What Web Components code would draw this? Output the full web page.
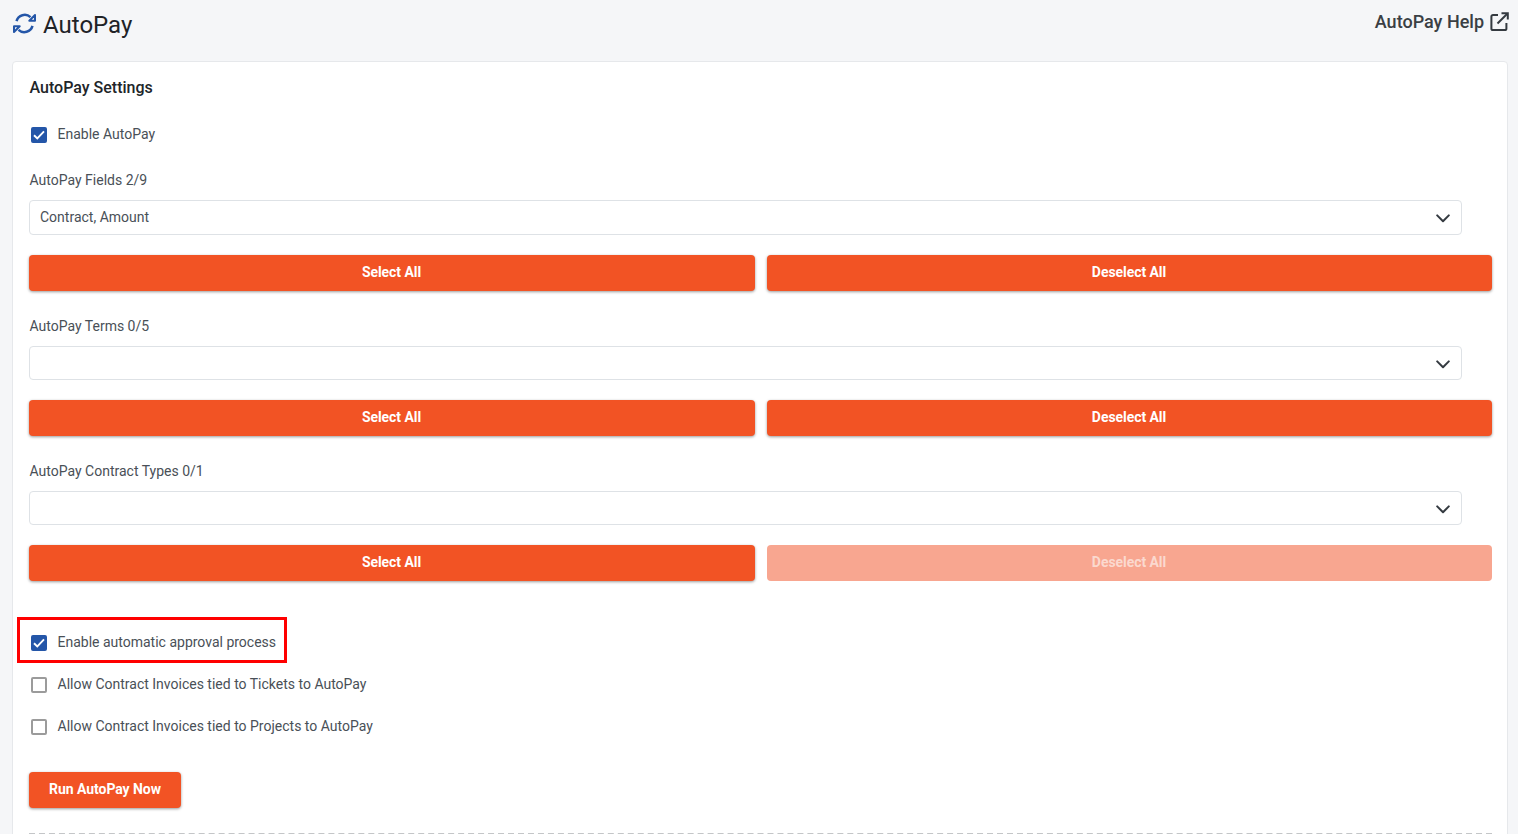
<!DOCTYPE html>
<html>
<head>
<meta charset="utf-8">
<title>AutoPay</title>
<style>
    html, body { margin: 0; height: 834px; overflow: hidden; background: #f5f6f8; }
    body { font-family: Roboto, "Liberation Sans", sans-serif; color: #212529; }
</style>
</head>
<body>
<autopay-page></autopay-page>

<script>
const CHEVRON = `<svg width="14" height="9" viewBox="0 0 14 9" fill="none"><path d="M1.2 1.4 7 7.2l5.8-5.8" stroke="#343a40" stroke-width="2" stroke-linecap="round" stroke-linejoin="round"/></svg>`;

class PageHeader extends HTMLElement {
    constructor() {
        super();
        this.attachShadow({ mode: 'open' });
        this.shadowRoot.innerHTML = `
            <style>
                :host { display: flex; justify-content: space-between; height: 61px; padding: 0 9px 0 12px; box-sizing: border-box; }
                .title { display: flex; align-items: center; gap: 7.5px; height: 50px; font-size: 24px; color: #1f2327; }
                .title svg { margin: 0 0 3px .5px; }
                .help { display: flex; align-items: center; gap: 6px; height: 43px; font-size: 18px; font-weight: 500; color: #3a3f44; }
                svg { display: block; }
            </style>
            <div class="title">
                <svg width="23" height="23" viewBox="0 0 23 23" fill="none" stroke="#2456a8" stroke-width="2.5">
                    <path d="M3.5 9.2A8.5 8.5 0 0 1 17.5 5.2"/>
                    <path d="M19.5 13.8A8.5 8.5 0 0 1 5.5 17.8"/>
                    <path d="M22 3v5.7h-5.7z" stroke-width="2" stroke-linejoin="round"/>
                    <path d="M1 20v-5.7h5.7z" stroke-width="2" stroke-linejoin="round"/>
                </svg>
                <span>AutoPay</span>
            </div>
            <div class="help">
                <span>AutoPay Help</span>
                <svg width="19" height="19" viewBox="0 0 19 19" fill="none" stroke="#343a40" stroke-width="2">
                    <path d="M8 3H3a1.6 1.6 0 0 0-1.6 1.6v11.8A1.6 1.6 0 0 0 3 18h11.8a1.6 1.6 0 0 0 1.6-1.6V11"/>
                    <path d="M7.5 11.5 17 2"/>
                    <path d="M11.5 1.2h6.3v6.3"/>
                </svg>
            </div>
        `;
    }
}

class CheckRow extends HTMLElement {
    constructor() {
        super();
        this.attachShadow({ mode: 'open' });
        const checked = this.hasAttribute('checked');
        const box = checked
            ? `<span class="box on"><svg width="12" height="10" viewBox="0 0 12 10" fill="none"><path d="M1 5.2 4.3 8.4 11 1.4" stroke="#fff" stroke-width="1.9"/></svg></span>`
            : `<span class="box"></span>`;
        this.shadowRoot.innerHTML = `
            <style>
                :host { display: flex; align-items: center; gap: 10.5px; position: relative; height: 20px; padding-left: 2px; font-size: 14px; color: #495057; }
                .box { width: 16px; height: 16px; box-sizing: border-box; border: 2px solid #9b9b9b; border-radius: 2px; display: flex; align-items: center; justify-content: center; background: #fff; margin-top: 1px; }
                .box.on { background: #2456a8; border-color: #2456a8; }
                .mark { display: none; }
                :host([marked]) .mark { display: block; position: absolute; left: -12px; top: -15px; width: 270px; height: 46px; box-sizing: border-box; border: 3px solid #f00; }
            </style>
            ${box}
            <span><slot></slot></span>
            <div class="mark"></div>
        `;
    }
}

class OrangeButton extends HTMLElement {
    constructor() {
        super();
        this.attachShadow({ mode: 'open' });
        this.shadowRoot.innerHTML = `
            <style>
                :host { display: flex; align-items: center; justify-content: center; box-sizing: border-box; height: 36px; padding: 0 1px 2px 0; border-radius: 4px; background: #f25324; color: #fff; font-size: 14px; font-weight: 700; letter-spacing: -.06px; box-shadow: 0 1px 3px rgba(0,0,0,.4); }
                :host(.run) { padding-right: 0; }
                :host([disabled]) { background: #f8a690; color: #fbd9cf; box-shadow: none; }
            </style>
            <slot></slot>
        `;
    }
}

class FieldGroup extends HTMLElement {
    constructor() {
        super();
        this.attachShadow({ mode: 'open' });
        const value = this.getAttribute('value') || '';
        const off = this.hasAttribute('deselect-off') ? 'disabled' : '';
        this.shadowRoot.innerHTML = `
            <style>
                :host { display: block; }
                .label { height: 20px; line-height: 20px; padding-left: .5px; font-size: 14px; color: #495057; margin-bottom: 10px; }
                .select { display: flex; align-items: center; justify-content: space-between; box-sizing: border-box; width: 1432.5px; height: var(--h, 34px); padding: 0 10.5px 0 10px; background: #fff; border: 1px solid #dee2e6; border-radius: 4px; font-size: 14px; color: #495057; }
                .select span { margin-bottom: 2px; }
                .select svg { margin-top: 2px; }
                .buttons { display: grid; grid-template-columns: 726px 725px; gap: 12px; margin-top: 20px; }
            </style>
            <div class="label"><slot></slot></div>
            <div class="select"><span>${value}</span>${CHEVRON}</div>
            <div class="buttons">
                <orange-button>Select All</orange-button>
                <orange-button ${off}>Deselect All</orange-button>
            </div>
        `;
    }
}

class SettingsCard extends HTMLElement {
    constructor() {
        super();
        this.attachShadow({ mode: 'open' });
        this.shadowRoot.innerHTML = `
            <style>
                :host { display: block; margin: 0 10px 0 12px; height: 800px; box-sizing: border-box; padding: 16px 16px 0 16px; background: #fff; border: 1px solid #e6e8eb; border-radius: 4px; }
                h2 { margin: 0 0 26px; height: 20px; line-height: 20px; padding-left: .5px; font-size: 16px; font-weight: 500; color: #212529; }
                .groups { display: flex; flex-direction: column; gap: 25px; margin-top: 26px; }
                .groups field-group:first-child { --h: 35px; }
                .checks { display: flex; flex-direction: column; gap: 22px; margin-top: 51px; }
                .run { width: 152px; margin-top: 36px; }
                hr { border: 0; border-top: 2px dashed #c4c6c8; margin: 25px 0 0; width: 1463px; }
            </style>
            <h2>AutoPay Settings</h2>
            <check-row checked>Enable AutoPay</check-row>
            <div class="groups">
                <field-group value="Contract, Amount">AutoPay Fields 2/9</field-group>
                <field-group>AutoPay Terms 0/5</field-group>
                <field-group deselect-off>AutoPay Contract Types 0/1</field-group>
            </div>
            <div class="checks">
                <check-row checked marked>Enable automatic approval process</check-row>
                <check-row>Allow Contract Invoices tied to Tickets to AutoPay</check-row>
                <check-row>Allow Contract Invoices tied to Projects to AutoPay</check-row>
            </div>
            <orange-button class="run">Run AutoPay Now</orange-button>
            <hr>
        `;
    }
}

class AutopayPage extends HTMLElement {
    constructor() {
        super();
        this.attachShadow({ mode: 'open' });
        this.shadowRoot.innerHTML = `
            <style>:host { display: block; }</style>
            <page-header></page-header>
            <settings-card></settings-card>
        `;
    }
}

customElements.define('page-header', PageHeader);
customElements.define('check-row', CheckRow);
customElements.define('orange-button', OrangeButton);
customElements.define('field-group', FieldGroup);
customElements.define('settings-card', SettingsCard);
customElements.define('autopay-page', AutopayPage);
</script>
</body>
</html>
